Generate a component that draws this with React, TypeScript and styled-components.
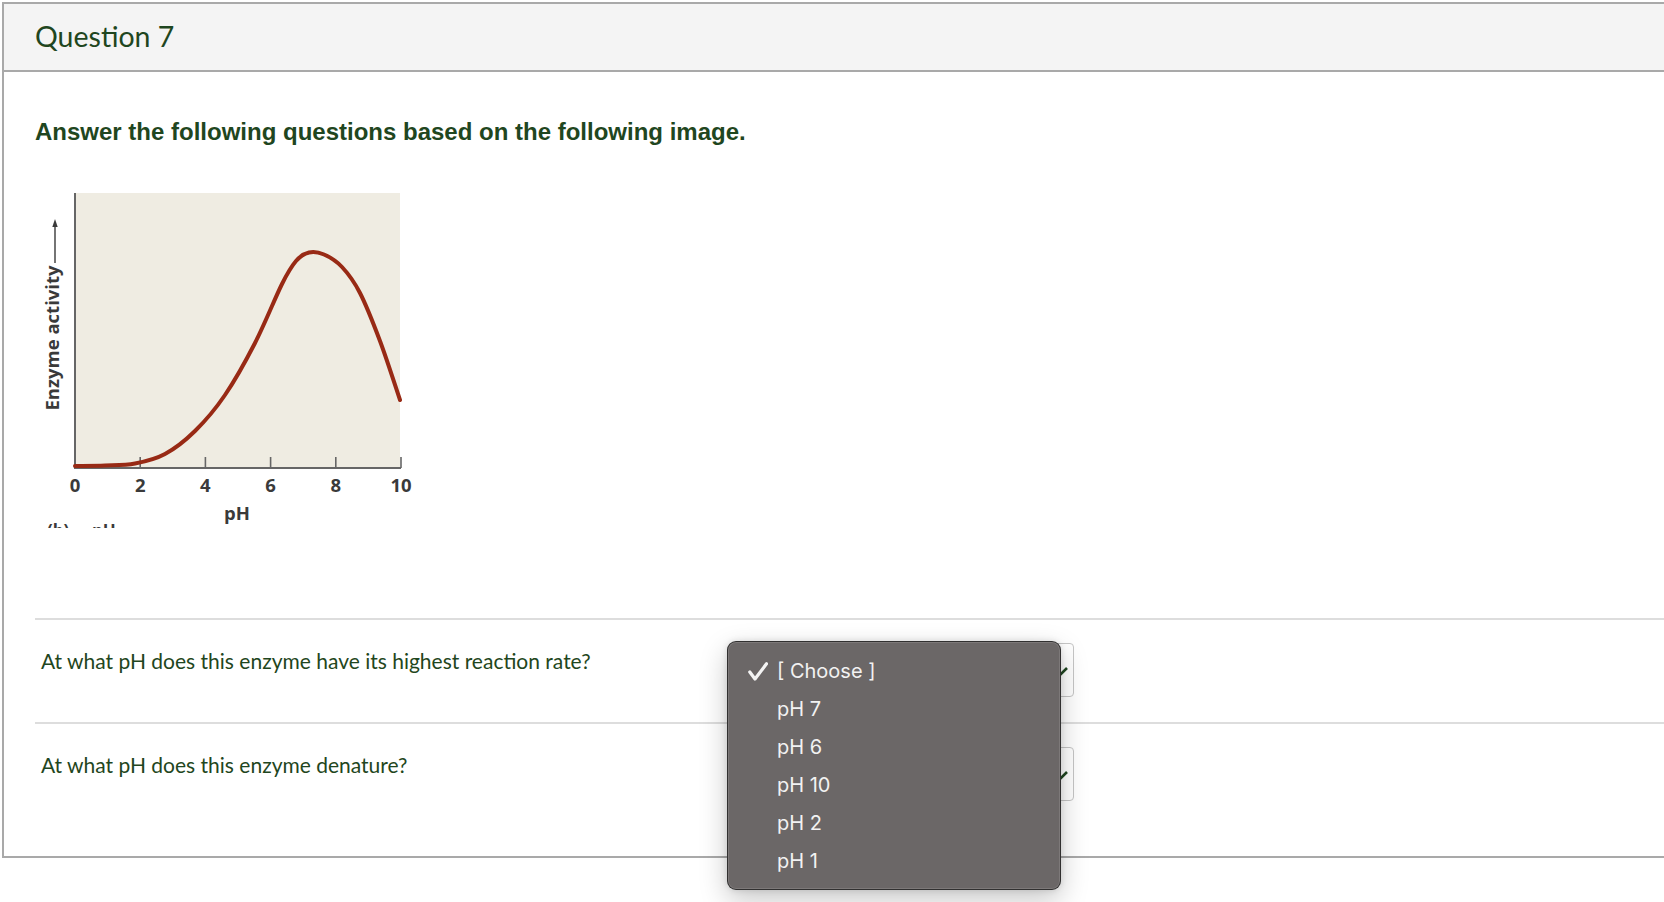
import React from "react";
import styled, { createGlobalStyle } from "styled-components";

const GlobalStyle = createGlobalStyle`
  html, body {
    margin: 0;
    padding: 0;
    background: #ffffff;
  }
  body {
    min-height: 100vh;
    font-family: Lato, "Open Sans", sans-serif;
  }
  #root {
    min-height: 100vh;
  }
`;

const GREEN = "#1f4620";

const Card = styled.section`
  margin: 2px 0 0 2px;
  border: 2px solid #a9a9a9;
  border-right: none;
  background: #ffffff;
`;

const Header = styled.header`
  background: #f4f4f4;
  border-bottom: 2px solid #a9a9a9;
  padding: 15px 0 17px 31px;
`;

const Title = styled.h2`
  margin: 0;
  font-family: Lato, "Open Sans", sans-serif;
  font-size: 28.5px;
  line-height: 34px;
  font-weight: 400;
  color: ${GREEN};
`;

const Body = styled.div`
  padding: 0 0 30px 31px;
`;

const Intro = styled.p`
  margin: 46px 0 0 0;
  font-family: "Liberation Sans", Arial, sans-serif;
  font-weight: 700;
  font-size: 24px;
  color: ${GREEN};
`;

const Figure = styled.svg`
  display: block;
  margin-top: 39px;
`;

const QuestionList = styled.div`
  margin-top: 90px;
`;

const Row = styled.div`
  display: flex;
  align-items: flex-start;
  border-top: 2px solid #dddddd;
  padding: 23px 0 25px 6px;
`;

const QText = styled.div`
  width: 687px;
  padding-top: 5px;
  font-family: Lato, "Open Sans", sans-serif;
  font-size: 21px;
  line-height: 25px;
  color: ${GREEN};
`;

const Select = styled.div`
  position: relative;
  box-sizing: border-box;
  width: 346px;
  height: 54px;
  border: 1px solid #c6c6c6;
  border-radius: 4px;
  background: #ffffff;
  display: flex;
  align-items: center;
  padding-left: 12px;
  font-family: Lato, sans-serif;
  font-size: 18px;
  color: ${GREEN};
`;

const Chevron = styled.svg`
  position: absolute;
  left: 322px;
  top: 21px;
`;

const Popup = styled.div`
  position: absolute;
  left: -2px;
  top: -3px;
  width: 334px;
  height: 249px;
  box-sizing: border-box;
  padding: 10px 0;
  background: #6b6767;
  border: 1px solid rgba(30, 30, 30, 0.75);
  border-radius: 9px;
  box-shadow: inset 0 0 0 1px rgba(255, 255, 255, 0.12),
    0 10px 28px rgba(0, 0, 0, 0.22), 0 0 6px rgba(0, 0, 0, 0.12);
  z-index: 10;
`;

const Item = styled.div`
  display: flex;
  align-items: center;
  height: 38px;
  padding-left: 20px;
  font-family: Inter, "Liberation Sans", sans-serif;
  font-size: 20px;
  color: #f2f2f2;
`;

const CheckSlot = styled.span`
  display: inline-flex;
  width: 29px;
  flex: none;
`;

const points: [number, number][] = [
  [40, 281],
  [70, 280.5],
  [100, 278.5],
  [130, 269],
  [160, 246],
  [190, 210],
  [220, 158],
  [247, 99],
  [261, 76],
  [274, 67.5],
  [289, 69.5],
  [307, 82],
  [325, 108],
  [345, 156],
  [365, 215],
];

function smoothPath(pts: [number, number][]): string {
  let d = `M${pts[0][0]},${pts[0][1]}`;
  for (let i = 0; i < pts.length - 1; i++) {
    const p0 = pts[i - 1] || pts[i];
    const p1 = pts[i];
    const p2 = pts[i + 1];
    const p3 = pts[i + 2] || p2;
    const c1x = p1[0] + (p2[0] - p0[0]) / 6;
    const c1y = p1[1] + (p2[1] - p0[1]) / 6;
    const c2x = p2[0] - (p3[0] - p1[0]) / 6;
    const c2y = p2[1] - (p3[1] - p1[1]) / 6;
    d += ` C${c1x.toFixed(1)},${c1y.toFixed(1)} ${c2x.toFixed(1)},${c2y.toFixed(1)} ${p2[0]},${p2[1]}`;
  }
  return d;
}

const ticks = [0, 2, 4, 6, 8, 10];

function EnzymeChart() {
  const xFor = (ph: number) => 40 + ph * 32.6;
  return (
    <Figure width={390} height={343} viewBox="0 0 390 343">
      <rect x={40} y={8} width={325} height={275} fill="#efece2" />
      <line x1={40} y1={8} x2={40} y2={284} stroke="#666" strokeWidth={2} />
      <line x1={39} y1={283} x2={366} y2={283} stroke="#666" strokeWidth={2} />
      {ticks.slice(1).map((t) => (
        <line key={t} x1={xFor(t)} y1={272} x2={xFor(t)} y2={283} stroke="#666" strokeWidth={1.6} />
      ))}
      <path d={smoothPath(points)} fill="none" stroke="#982a15" strokeWidth={4} strokeLinecap="round" />
      {ticks.map((t) => (
        <text
          key={t}
          x={xFor(t)}
          y={307}
          textAnchor="middle"
          fontFamily="'Open Sans', sans-serif"
          fontWeight={700}
          fontSize={18.5}
          fill="#3a3a3a"
        >
          {t}
        </text>
      ))}
      <text x={202} y={335} textAnchor="middle" fontFamily="'Open Sans', sans-serif" fontWeight={700} fontSize={18.5} fill="#3a3a3a">
        pH
      </text>
      <text
        transform="translate(24,153) rotate(-90)"
        textAnchor="middle"
        fontFamily="'Open Sans', sans-serif"
        fontWeight={700}
        fontSize={18.5}
        fill="#3a3a3a"
      >
        Enzyme activity
      </text>
      <line x1={20} y1={78} x2={20} y2={40} stroke="#3a3a3a" strokeWidth={1.4} />
      <path d="M20,34 L17.3,42 L22.7,42 Z" fill="#3a3a3a" />
      <text x={12} y={352} fontFamily="'Open Sans', sans-serif" fontWeight={700} fontSize={17} fill="#3a3a3a">
        (b)
      </text>
      <text x={57} y={352} fontFamily="'Open Sans', sans-serif" fontWeight={700} fontSize={17} fill="#3a3a3a">
        pH
      </text>
    </Figure>
  );
}

function ChevronIcon() {
  return (
    <Chevron width={18} height={12} viewBox="0 0 18 12">
      <path d="M2,3 L9,10 L16,3" fill="none" stroke={GREEN} strokeWidth={2.6} />
    </Chevron>
  );
}

function CheckIcon() {
  return (
    <svg width={20} height={19} viewBox="0 0 20 19">
      <path d="M1.8,10 L7,17 L18.5,1.8" fill="none" stroke="#f4f4f4" strokeWidth={3.2} strokeLinecap="round" strokeLinejoin="round" />
    </svg>
  );
}

const options = ["[ Choose ]", "pH 7", "pH 6", "pH 10", "pH 2", "pH 1"];

export default function App() {
  return (
    <>
      <GlobalStyle />
      <Card>
        <Header>
          <Title>Question 7</Title>
        </Header>
        <Body>
          <Intro>Answer the following questions based on the following image.</Intro>
          <EnzymeChart />
          <QuestionList>
            <Row>
              <QText>At what pH does this enzyme have its highest reaction rate?</QText>
              <Select>
                [ Choose ]
                <ChevronIcon />
                <Popup>
                  {options.map((o, i) => (
                    <Item key={o}>
                      <CheckSlot>{i === 0 ? <CheckIcon /> : null}</CheckSlot>
                      {o}
                    </Item>
                  ))}
                </Popup>
              </Select>
            </Row>
            <Row>
              <QText>At what pH does this enzyme denature?</QText>
              <Select>
                [ Choose ]
                <ChevronIcon />
              </Select>
            </Row>
          </QuestionList>
        </Body>
      </Card>
    </>
  );
}
